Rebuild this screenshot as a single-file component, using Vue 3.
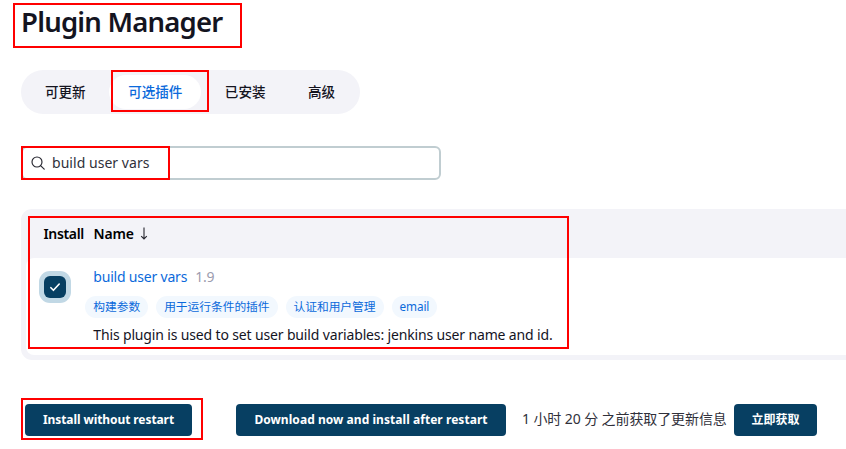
<script setup>
const tabs = [
  { label: '可更新' },
  { label: '可选插件', active: true },
  { label: '已安装' },
  { label: '高级' },
]
const tags = ['构建参数', '用于运行条件的插件', '认证和用户管理', 'email']
</script>

<template>
  <main class="page">
    <h1><span class="t-title">Plugin Manager</span></h1>

    <nav class="tabs">
      <a v-for="tab in tabs" :key="tab.label" class="tab" :class="{ active: tab.active }">{{ tab.label }}</a>
    </nav>

    <div class="search">
      <svg class="search-icon" viewBox="0 0 14 14" fill="none" stroke="#26262f" stroke-width="1.15" stroke-linecap="round">
        <circle cx="6" cy="6" r="5" />
        <path d="M9.6 9.6L13.2 13.2" />
      </svg>
      <span class="t-query">build user vars</span>
    </div>

    <section class="table">
      <div class="thead">
        <span class="th-install"><span class="t-install">Install</span></span>
        <span class="t-name">Name</span>
        <svg class="arrow" viewBox="0 0 8 13" fill="none" stroke="#26262f" stroke-width="1.1">
          <path d="M4 0.5V12M1.2 9.2L4 12L6.8 9.2" />
        </svg>
      </div>
      <div class="tbody">
        <span class="checkbox">
          <svg viewBox="0 0 22 22" fill="none" stroke="#fff" stroke-width="1.6" stroke-linecap="round" stroke-linejoin="round">
            <path d="M6.9 11.7L9.4 14.3L15.2 8" />
          </svg>
        </span>
        <div class="info">
          <div class="name-row"><a class="t-link">build user vars</a><span class="version">1.9</span></div>
          <div class="tags">
            <span v-for="tag in tags" :key="tag" class="tag">{{ tag }}</span>
          </div>
          <div class="desc"><span class="t-desc">This plugin is used to set user build variables: jenkins user name and id.</span></div>
        </div>
      </div>
    </section>

    <footer class="actions">
      <button class="btn b1"><span class="t-b1">Install without restart</span></button>
      <button class="btn b2"><span class="t-b2">Download now and install after restart</span></button>
      <span class="status"><span class="t-status">1 小时 20 分 之前获取了更新信息</span></span>
      <button class="btn b3">立即获取</button>
    </footer>

    <i class="mark m-title"></i>
    <i class="mark m-tab"></i>
    <i class="mark m-search"></i>
    <i class="mark m-row"></i>
    <i class="mark m-button"></i>
  </main>
</template>

<style>
body { margin: 0; background: #fff; overflow: hidden; }
</style>

<style scoped>
* { box-sizing: border-box; }
.page {
  position: relative;
  width: 846px;
  height: 449px;
  overflow: hidden;
  padding-left: 21px;
  background: #fff;
  color: #14141f;
  font-family: "Noto Sans", "Noto Sans CJK SC", sans-serif;
  font-size: 14px;
  white-space: nowrap;
}
h1 { margin: 0; height: 70px; font-size: 27.5px; line-height: 44px; font-weight: 650; }
.t-title { letter-spacing: -0.78px; }
.tabs {
  display: flex;
  align-items: center;
  gap: 4.5px;
  width: 339px;
  height: 44px;
  padding: 0 5px;
  border-radius: 22px;
  background: #f3f3f8;
}
.tab {
  height: 34px;
  padding: 0 19px;
  border-radius: 17px;
  font: 500 13.55px/32px "Noto Sans CJK SC", sans-serif;
}
.tab.active { background: #fff; color: #0b6adb; }
.search {
  display: flex;
  align-items: center;
  width: 420px;
  height: 34px;
  margin-top: 32px;
  padding-left: 8px;
  border: 2px solid #c0cdd1;
  border-radius: 6px;
  color: #30303a;
}
.search-icon { width: 14px; height: 14px; margin-right: 7px; }
.t-query { letter-spacing: 0.04px; padding-bottom: 2px; }
.table {
  height: 151px;
  margin-top: 29px;
  padding: 0 0 5px 5px;
  border-radius: 11px 0 0 11px;
  background: #f3f3f8;
}
.thead { display: flex; align-items: center; height: 49px; padding-left: 17.5px; color: #000; font-weight: 600; }
.th-install { width: 50px; }
.t-install { letter-spacing: -0.35px; }
.t-name { letter-spacing: -0.2px; }
.arrow { width: 8px; height: 13px; margin-left: 6px; }
.tbody { display: flex; height: 97px; padding: 18px 0 0 18px; border-radius: 8px 0 0 8px; background: #fff; }
.checkbox {
  width: 22px;
  height: 22px;
  border-radius: 6px;
  background: #073f62;
  box-shadow: 0 0 0 5px #c1d8e5;
}
.checkbox svg { display: block; width: 22px; height: 22px; }
.info { margin: -9px 0 0 27.3px; }
.name-row { height: 20px; line-height: 20px; color: #0b6adb; }
.t-link { letter-spacing: -0.2px; }
.version { margin-left: 8px; letter-spacing: -0.2px; color: #9c9cae; }
.tags { display: flex; gap: 8px; margin: 9px 0 0 -8px; }
.tag {
  height: 22px;
  padding: 0 8px;
  border-radius: 11px;
  background: #f2f8fe;
  color: #0b6adb;
  font-size: 11.75px;
  letter-spacing: -0.04px;
  line-height: 21px;
}
.tag:last-child { letter-spacing: -0.1px; }
.desc { margin-top: 6px; height: 22px; line-height: 22px; }
.t-desc { letter-spacing: -0.15px; }
.actions { display: flex; align-items: center; height: 32px; margin: 44px 0 0 4px; }
.btn {
  flex: none;
  height: 32px;
  padding: 0;
  border: 0;
  border-radius: 4px;
  background: #073f62;
  color: #fff;
  font: 700 12px/32px "Noto Sans", "Noto Sans CJK SC", sans-serif;
}
.b1 { width: 167px; }
.t-b1 { letter-spacing: -0.08px; }
.b2 { width: 270px; margin-left: 44px; }
.t-b2 { letter-spacing: 0.05px; }
.b3 { width: 83px; }
.status { width: 228px; padding: 0 0 4px 16px; color: #30303a; }
.t-status { letter-spacing: -0.1px; }
.mark { position: absolute; border: 2px solid #f00; pointer-events: none; }
.m-title { left: 13px; top: 3px; width: 229px; height: 45px; }
.m-tab { left: 111px; top: 70px; width: 98px; height: 42px; }
.m-search { left: 21px; top: 146px; width: 149px; height: 34px; }
.m-row { left: 28px; top: 216px; width: 541px; height: 133px; }
.m-button { left: 21px; top: 398px; width: 182px; height: 42px; }
</style>
